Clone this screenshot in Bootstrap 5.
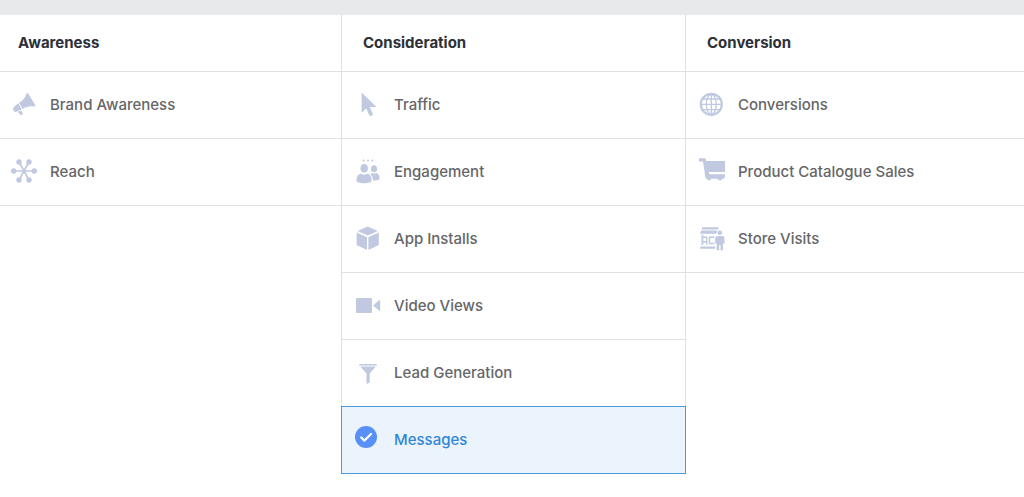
<!DOCTYPE html>
<html lang="en">
<head>
<meta charset="utf-8">
<meta name="viewport" content="width=device-width, initial-scale=1">
<title>Campaign objective</title>
<link href="https://cdn.jsdelivr.net/npm/bootstrap@5.3.0/dist/css/bootstrap.min.css" rel="stylesheet">
<style>
  body { font-family: Inter, "Liberation Sans", sans-serif; font-size: 15px; line-height: 24px; color: #666668; background: #fff; }
  .top-strip { height: 15px; background: #e8e9eb; }
  .objectives { display: grid; grid-template-columns: 341fr 345fr 338fr; align-items: start; }
  .group-title { height: 57px; padding: 0 18px; font-size: 15px; font-weight: 700; color: #2c3038; border-bottom: 1px solid #dfe0e2; }
  .option { height: 67px; padding: 0 11px; gap: 13px; font-weight: 500; color: inherit; background: none; border: 0; border-bottom: 1px solid #dfe0e2; }
  .group-middle .group-title, .group-last .group-title { padding: 0 21px; }
  .group-middle .option, .group-last .option { padding: 0 13px; }
  .group-middle .group-title, .group-middle .option { border-left: 1px solid #dfe0e2; border-right: 1px solid #dfe0e2; }
  .option svg { width: 26px; height: 26px; margin-bottom: 2px; flex: none; fill: #c0c9df; overflow: visible; }
  .group-middle .option.selected { height: 68px; margin-top: -1px; color: #2f86d8; background: #ebf4fc; border: 1px solid #4a9ae0; }
  .option.selected svg { fill: #5890f7; }
</style>
</head>
<body>
<div class="top-strip"></div>
<main class="objectives">
  <section>
    <h2 class="group-title d-flex align-items-center m-0">Awareness</h2>
    <button type="button" class="option d-flex align-items-center w-100 text-start">
      <svg viewBox="0 0 26 26" aria-hidden="true"><path d="M15.500 2.600Q16.300 1.600 17.200 2.600L24.300 14.200Q24.500 15.600 23.200 15.700C19 14.800 15 15.800 11.600 18L8 11.700C12 9.700 14.600 6.500 15.500 2.600Z"/><path d="M7.300 12.200L10.700 18.300L5.600 20.800Q3.300 21.400 2.300 19.300Q1.500 17 3.400 15.500Z"/><path d="M6.800 20.900L9.900 19.400L10.700 20.700L12 22.300L10.300 24.500Z"/></svg>
      <span>Brand Awareness</span>
    </button>
    <button type="button" class="option d-flex align-items-center w-100 text-start">
      <svg viewBox="0 0 26 26" aria-hidden="true"><path d="M3 13H23M8 4L18 22M18 4L8 22" stroke="#c0c9df" stroke-width="1.700"/><circle cx="2.700" cy="13" r="2.700"/><circle cx="23.300" cy="13" r="2.700"/><circle cx="8" cy="4" r="2.700"/><circle cx="18" cy="4" r="2.700"/><circle cx="8" cy="22" r="2.700"/><circle cx="18" cy="22" r="2.700"/></svg>
      <span>Reach</span>
    </button>
  </section>
  <section class="group-middle">
    <h2 class="group-title d-flex align-items-center m-0">Consideration</h2>
    <button type="button" class="option d-flex align-items-center w-100 text-start">
      <svg viewBox="0 0 26 26" aria-hidden="true"><path d="M6.600 1.500V21.800L11.200 17.600L14.800 25.200L18.200 23.700L14.800 16H21.500Z"/></svg>
      <span>Traffic</span>
    </button>
    <button type="button" class="option d-flex align-items-center w-100 text-start">
      <svg viewBox="0 0 26 26" aria-hidden="true"><circle cx="8.700" cy="2.400" r="1"/><circle cx="13" cy="2.400" r="1"/><circle cx="17.300" cy="2.400" r="1"/><ellipse cx="9.200" cy="10.300" rx="3.700" ry="4.300"/><ellipse cx="19" cy="10.700" rx="3.100" ry="3.500"/><path d="M1.500 22.500Q1.500 16 6.500 15.800Q9.200 17.500 12 15.800Q16.500 16 16.500 22.500Q16.500 25.300 9 25.300Q1.500 25.300 1.500 22.500Z"/><path d="M15.500 16Q16.200 15.100 17.200 15Q19 16 21 15Q24.600 15.500 24.600 20.500Q24.600 22.500 18 22.600Q18 18.500 15.500 16Z"/></svg>
      <span>Engagement</span>
    </button>
    <button type="button" class="option d-flex align-items-center w-100 text-start">
      <svg viewBox="0 0 26 26" aria-hidden="true"><path d="M12.700 1.500L22.900 6L12.700 10.500L2.500 6Z"/><path d="M1.600 7.500L12 12.200V25L1.600 20Z"/><path d="M23.800 7.500L13.400 12.200V25L23.800 20Z"/></svg>
      <span>App Installs</span>
    </button>
    <button type="button" class="option d-flex align-items-center w-100 text-start">
      <svg viewBox="0 0 26 26" aria-hidden="true"><rect x="1" y="6" width="16" height="15" rx="1.200"/><path d="M18 13.500L24.200 8.200Q25.200 7.800 25.200 8.800V18.200Q25.200 19.200 24.200 18.800Z"/></svg>
      <span>Video Views</span>
    </button>
    <button type="button" class="option d-flex align-items-center w-100 text-start">
      <svg viewBox="0 0 26 26" aria-hidden="true"><path d="M4.300 5H21.700V6.400H4.300ZM5.200 7.500H20.800L14.700 14.500V23.500L11.500 25V14.500Z"/></svg>
      <span>Lead Generation</span>
    </button>
    <button type="button" class="option selected d-flex align-items-center w-100 text-start" aria-pressed="true">
      <svg viewBox="0 0 26 26" aria-hidden="true"><circle cx="11" cy="11" r="11"/><path d="M6.200 11.500L9.500 14.600L16 8" fill="none" stroke="#fff" stroke-width="2.200" stroke-linecap="round" stroke-linejoin="round"/></svg>
      <span>Messages</span>
    </button>
  </section>
  <section class="group-last">
    <h2 class="group-title d-flex align-items-center m-0">Conversion</h2>
    <button type="button" class="option d-flex align-items-center w-100 text-start">
      <svg viewBox="0 0 26 26" aria-hidden="true"><g fill="none" stroke="#c0c9df" stroke-width="1.300"><circle cx="12.300" cy="13.300" r="10.500" stroke-width="2.200"/><ellipse cx="12.300" cy="13.300" rx="5" ry="10"/><path d="M12.300 3V24M2 13.300H23M4 8H20.600M4 18.600H20.600"/></g></svg>
      <span>Conversions</span>
    </button>
    <button type="button" class="option d-flex align-items-center w-100 text-start">
      <svg viewBox="0 0 26 26" aria-hidden="true"><path d="M0 .3H6.300L7.300 3H26V14H9.800L10.400 16.200H26V18.500L25 20.800H23.200A2.200 2.200 0 0 1 18.900 20.800H12.200A2.200 2.200 0 0 1 7.900 20.800L6.500 20L4 3.600H0Z"/></svg>
      <span>Product Catalogue Sales</span>
    </button>
    <button type="button" class="option d-flex align-items-center w-100 text-start">
      <svg viewBox="0 0 26 26" aria-hidden="true"><path d="M3 2.300H19.500V4.400H3ZM2.200 5.500H18V7L17 8.700H1ZM2.500 9.700H4.300V20H2.500ZM1.300 21.500H16.300V23.700H1.300Z"/><path d="M3 12.200H7.800V19.700M3 16.800H8M15.500 12.200H10.500V18.500H15.500" fill="none" stroke="#c0c9df" stroke-width="1.400"/><circle cx="20.800" cy="7.800" r="2.300"/><path d="M18.500 11H23Q25.500 11 25.500 13.500V18.500H24V25.300H21.500V20H20.200V25.300H17.700V18.500H16.200V13.500Q16.200 11 18.500 11Z"/></svg>
      <span>Store Visits</span>
    </button>
  </section>
</main>
<script src="https://cdn.jsdelivr.net/npm/bootstrap@5.3.0/dist/js/bootstrap.bundle.min.js"></script>
</body>
</html>
